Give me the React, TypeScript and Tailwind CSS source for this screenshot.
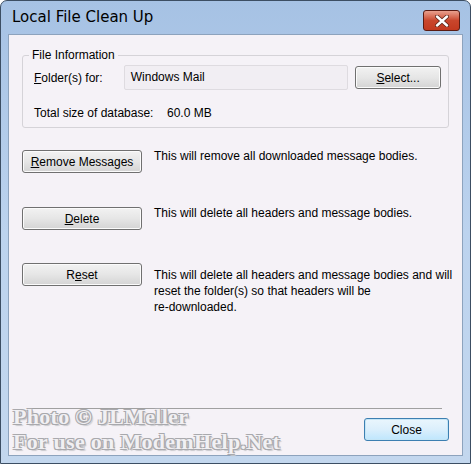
import React from "react";

const font = { fontFamily: '"Liberation Sans", Arial, sans-serif' };

function Btn({ children, className = "" }: { children: React.ReactNode; className?: string }) {
    return (
        <button
            className={`h-[23px] rounded-[3px] border border-[#707070] bg-gradient-to-b from-[#f2f2f2] via-[#e6e6e6] to-[#d4d4d4] text-[12px] text-black shadow-[inset_0_0_0_1px_#fbfbfb] ${className}`}
        >
            {children}
        </button>
    );
}

export default function App() {
    return (
        <div className="w-[471px] h-[464px] bg-white" style={font}>
            <div className="w-full h-full rounded-t-[7px] border border-[#3c4e63] bg-gradient-to-b from-[#a6c2e4] via-[#bcd3ee] to-[#c3d7ee] flex flex-col px-[7px] pb-[7px]">
                {/* Title bar */}
                <div className="h-[33px] flex items-center justify-between pl-[4px] pr-[3px]">
                    <span className="text-[15px] text-black" style={{ fontFamily: '"DejaVu Sans", sans-serif' }}>
                        Local File Clean Up
                    </span>
                    <div className="self-start mt-[9px] w-[37px] h-[21px] rounded-[3px] border border-[#5a1b12] bg-gradient-to-b from-[#e8a08e] via-[#c9462c] to-[#c2391f] flex items-center justify-center">
                        <svg width="14" height="12" viewBox="0 0 14 12">
                            <path d="M2 1.5 L12 10.5 M12 1.5 L2 10.5" stroke="#5a2418" strokeWidth="4" strokeLinecap="round" />
                            <path d="M2 1.5 L12 10.5 M12 1.5 L2 10.5" stroke="white" strokeWidth="2.4" strokeLinecap="round" />
                        </svg>
                    </div>
                </div>

                {/* Content */}
                <div className="flex-1 bg-[#f5f2f7] border border-[#8da3bd] flex flex-col px-[13px] pt-[20px] text-[12px] text-black">
                    {/* Group box */}
                    <div className="relative border border-[#d5d3d8] rounded-[3px] h-[73px] pl-[11px] pr-[7px] pt-[9px]">
                        <span className="absolute -top-[8px] left-[6px] bg-[#f5f2f7] px-[3px] leading-[14px]">File Information</span>
                        <div className="flex items-center">
                            <span className="w-[90px]"><u>F</u>older(s) for:</span>
                            <div className="w-[225px] h-[25px] border border-[#dedbe0] rounded-[2px] bg-[#f1eef3] pl-[6px] pt-[2px]">Windows Mail</div>
                            <Btn className="ml-[7px] w-[86px]">
                                <u>S</u>elect...
                            </Btn>
                        </div>
                        <div className="flex mt-[14px]">
                            <span className="w-[133px]">Total size of database:</span>
                            <span>60.0 MB</span>
                        </div>
                    </div>

                    {/* Actions */}
                    <div className="flex mt-[22px]">
                        <Btn className="w-[120px] shrink-0">
                            <u>R</u>emove Messages
                        </Btn>
                        <p className="ml-[12px] leading-[16px] -mt-[2px]">This will remove all downloaded message bodies.</p>
                    </div>
                    <div className="flex mt-[34px]">
                        <Btn className="w-[120px] shrink-0">
                            <u>D</u>elete
                        </Btn>
                        <p className="ml-[12px] leading-[16px] -mt-[2px]">This will delete all headers and message bodies.</p>
                    </div>
                    <div className="flex mt-[33px]">
                        <Btn className="w-[120px] shrink-0">
                            R<u>e</u>set
                        </Btn>
                        <p className="ml-[12px] leading-[16px] mt-[4px] whitespace-nowrap">
                            This will delete all headers and message bodies and will
                            <br />
                            reset the folder(s) so that headers will be
                            <br />
                            re-downloaded.
                        </p>
                    </div>

                    <div className="flex-1" />

                    {/* Footer */}
                    <div className="relative">
                        <div className="h-px bg-[#a0a0a0] mx-[7px]" />
                        <div className="flex justify-end pt-[9px] pb-[14px]">
                            <button className="w-[85px] h-[23px] rounded-[3px] border border-[#3c7fb1] bg-gradient-to-b from-[#eaf6fd] via-[#dbeffc] to-[#bee6fd] text-[12px] shadow-[inset_0_0_0_1px_#c4e5f6]">
                                Close
                            </button>
                        </div>
                        {/* Watermark */}
                        <div
                            className="absolute left-[-9px] top-[-4px] text-[22px] font-bold leading-[25px] tracking-[0.3px] text-[#f1f0f3]"
                            style={{
                                fontFamily: '"Liberation Serif", "DejaVu Serif", serif',
                                textShadow:
                                    "1px 1px 0 #a9a9ad, -1px -1px 0 #a9a9ad, 1px -1px 0 #a9a9ad, -1px 1px 0 #a9a9ad, 2px 2px 1px #c8c8cc",
                            }}
                        >
                            <div>Photo © JLMeller</div>
                            <div>For use on ModemHelp.Net</div>
                        </div>
                    </div>
                </div>
            </div>
        </div>
    );
}
